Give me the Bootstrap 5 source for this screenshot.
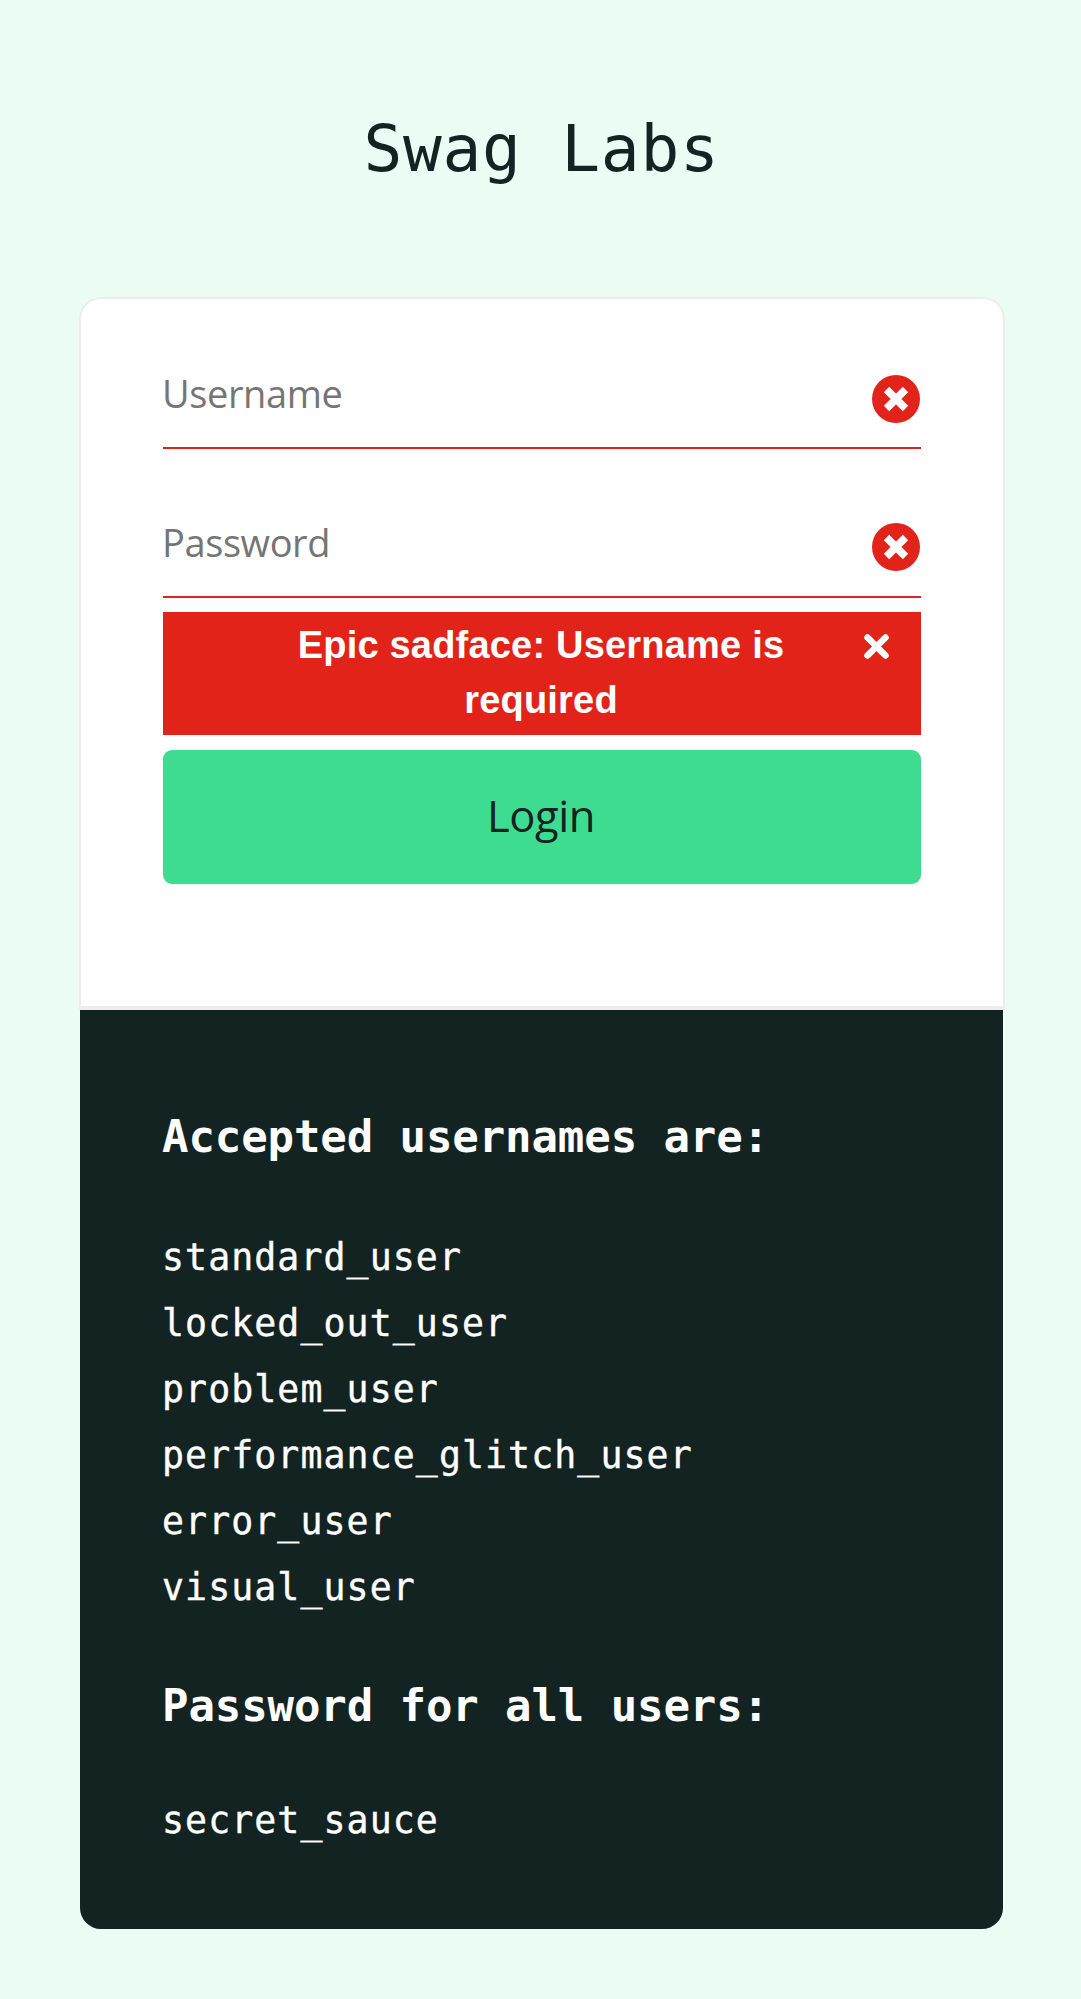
<!DOCTYPE html>
<html lang="en">
<head>
<meta charset="utf-8">
<meta name="viewport" content="width=device-width, initial-scale=1">
<title>Swag Labs</title>
<link href="https://cdn.jsdelivr.net/npm/bootstrap@5.3.0/dist/css/bootstrap.min.css" rel="stylesheet">
<style>
  body { background: #ebfcf5; color: #132322; font-family: "Open Sans", sans-serif; }
  .mono { font-family: "DejaVu Sans Mono", monospace; }
  .login-logo { height: 297px; padding: 107px 0 0 2px; font-size: 64.5px; line-height: 84px; letter-spacing: .75px; }
  .login-wrapper { width: 926px; height: 1632px; margin-left: 79px; }
  .login-box { height: 709px; padding: 55px 82px 0 82px; border: 2px solid #ededed; border-bottom: 0; border-radius: 22px 22px 0 0; }
  .form-group { height: 95px; border-bottom: 2px solid #e2231a; }
  .form-group + .form-group { margin-top: 54px; }
  .form-group .form-control { font-size: 38px; line-height: 52px; height: 78px; letter-spacing: -.4px; color: #132322; text-indent: -1px; }
  .form-group .form-control::placeholder { color: #757575; opacity: 1; }
  .form-group svg { width: 48px; height: 48px; margin: 21px 1.5px 0 0; }
  .form-group + .form-group svg { margin-top: 20px; }
  .error-box { height: 123px; margin-top: 14px; background: #e2231a; font: bold 38px/55px "Liberation Sans", Arial, sans-serif; letter-spacing: .2px; padding: 6px 109px 0 107px; }
  .error-close { top: 22px; right: 32px; width: 25px; height: 25px; }
  .btn-login { height: 134px; margin-top: 15px; padding: 0 2px 2px 0; border-radius: 9px; background: #3ddc91; color: #132322; font-size: 43.5px; line-height: 1; letter-spacing: -.4px; }
  .btn-login:hover { background: #35c983; }
  .credentials-wrap { border-top: 4px solid #ededed; }
  .credentials { height: 919px; margin: 0 2px 0 1px; background: #132322; padding: 94px 82px 0; border-radius: 0 0 21px 21px; }
  .credentials h4 { font-size: 44px; line-height: 66px; margin: 0 0 55px; font-weight: 700; white-space: nowrap; letter-spacing: -.1px; }
  .credentials ul, .credentials p { font-size: 36.5px; line-height: 66px; letter-spacing: 1.1px; -webkit-text-stroke: .4px #fff; }
  .credentials ul { margin-bottom: 52px; }
  .credentials ul + h4 { margin-bottom: 49px; }
</style>
</head>
<body>
<main>
  <h1 class="login-logo mono text-center fw-normal m-0">Swag Labs</h1>
  <div class="login-wrapper">
    <form class="login-box bg-white">
      <div class="form-group d-flex align-items-start">
        <input class="form-control border-0 rounded-0 shadow-none bg-transparent p-0" type="text" placeholder="Username" aria-label="Username">
        <svg class="flex-shrink-0" viewBox="0 0 48 48"><circle cx="24" cy="24" r="24" fill="#e2231a"/><path d="M14.500 14.500l19 19M33.500 14.500l-19 19" stroke="#fff" stroke-width="7.600"/></svg>
      </div>
      <div class="form-group d-flex align-items-start">
        <input class="form-control border-0 rounded-0 shadow-none bg-transparent p-0" type="password" placeholder="Password" aria-label="Password">
        <svg class="flex-shrink-0" viewBox="0 0 48 48"><circle cx="24" cy="24" r="24" fill="#e2231a"/><path d="M14.500 14.500l19 19M33.500 14.500l-19 19" stroke="#fff" stroke-width="7.600"/></svg>
      </div>
      <div class="error-box position-relative text-white text-center" role="alert">Epic sadface: Username is required
        <svg class="error-close position-absolute" viewBox="0 0 25 25"><path d="M3.500 3.500l18 18M21.500 3.500l-18 18" stroke="#fff" stroke-width="6.500" stroke-linecap="round"/></svg>
      </div>
      <button class="btn btn-login w-100 border-0" type="button">Login</button>
    </form>
    <div class="credentials-wrap">
      <section class="credentials mono text-white">
        <h4>Accepted usernames are:</h4>
        <ul class="list-unstyled">
          <li>standard_user</li>
          <li>locked_out_user</li>
          <li>problem_user</li>
          <li>performance_glitch_user</li>
          <li>error_user</li>
          <li>visual_user</li>
        </ul>
        <h4>Password for all users:</h4>
        <p class="mb-0">secret_sauce</p>
      </section>
    </div>
  </div>
</main>
<script src="https://cdn.jsdelivr.net/npm/bootstrap@5.3.0/dist/js/bootstrap.bundle.min.js"></script>
</body>
</html>
